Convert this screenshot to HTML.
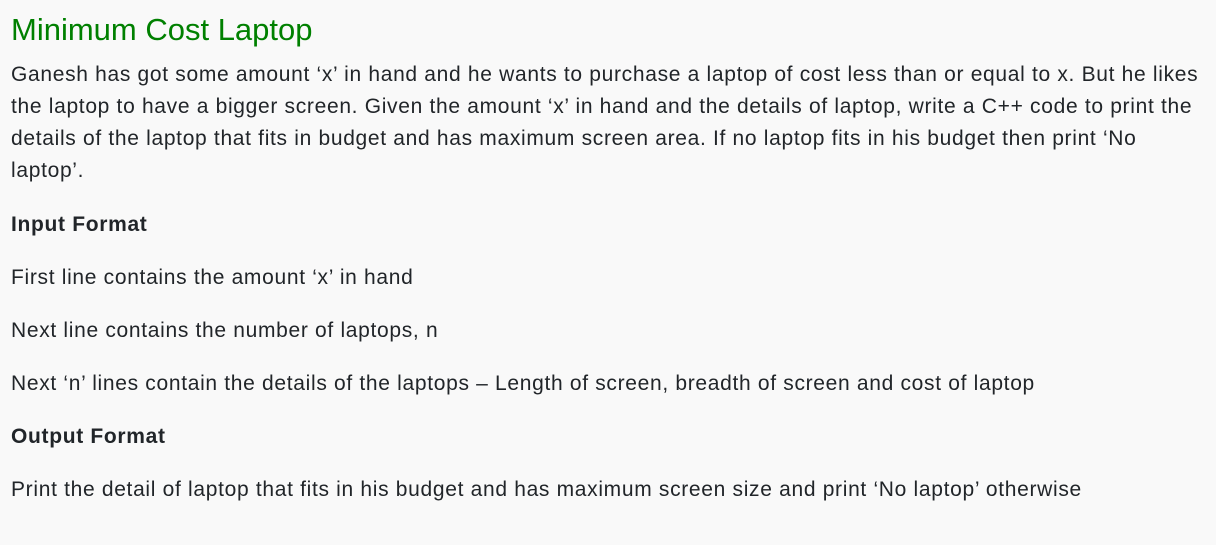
<!DOCTYPE html>
<html><head><style>
body{margin:0;background:#f9f9f9;width:1216px;height:545px;overflow:hidden;font-family:"Liberation Sans",sans-serif;color:#212529;}
.a{position:absolute;left:11px;white-space:nowrap;font-size:21px;letter-spacing:0.68px;line-height:32px;}
h1{position:absolute;left:11px;top:10px;margin:0;font-size:31px;font-weight:normal;color:#008000;line-height:40px;}
b{font-weight:bold}
</style></head><body>
<h1>Minimum Cost Laptop</h1>
<div class="a" style="top:59px">Ganesh has got some amount ‘x’ in hand and he wants to purchase a laptop of cost less than or equal to x. But he likes<br>the laptop to have a bigger screen. Given the amount ‘x’ in hand and the details of laptop, write a C++ code to print the<br>details of the laptop that fits in budget and has maximum screen area. If no laptop fits in his budget then print ‘No<br>laptop’.</div>
<div class="a" style="top:209px"><b>Input Format</b></div>
<div class="a" style="top:262px">First line contains the amount ‘x’ in hand</div>
<div class="a" style="top:315px">Next line contains the number of laptops, n</div>
<div class="a" style="top:368px">Next ‘n’ lines contain the details of the laptops – Length of screen, breadth of screen and cost of laptop</div>
<div class="a" style="top:421px"><b>Output Format</b></div>
<div class="a" style="top:474px">Print the detail of laptop that fits in his budget and has maximum screen size and print ‘No laptop’ otherwise</div>
</body></html>
